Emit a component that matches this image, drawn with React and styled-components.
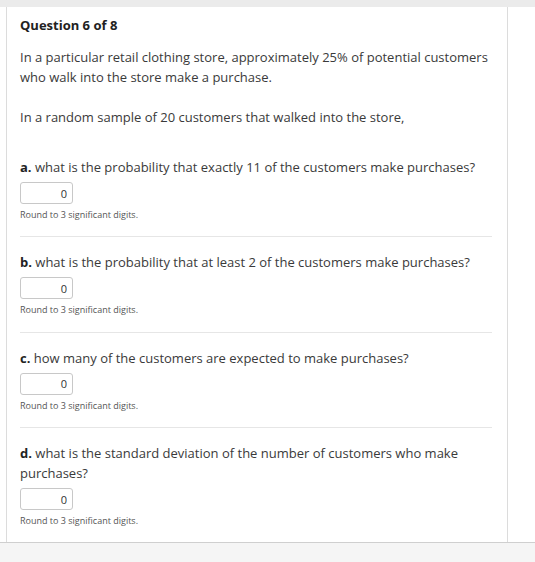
import React from 'react';
import styled, { createGlobalStyle } from 'styled-components';

const Global = createGlobalStyle`
  html, body {
    margin: 0;
    padding: 0;
    background: #fff;
  }
  body {
    font-family: 'Open Sans', 'Noto Sans', sans-serif;
    color: #3a3a3a;
  }
`;

const Page = styled.div`
  display: flex;
  flex-direction: column;
  height: 562px;
`;

const TopBand = styled.div`
  height: 7px;
  background: #ebebeb;
  flex-shrink: 0;
`;

const Main = styled.main`
  flex: 1;
  display: flex;
  min-height: 0;
`;

const Card = styled.section`
  box-sizing: border-box;
  margin-left: 6px;
  width: 502px;
  border-left: 1px solid #dcdcdc;
  border-right: 1px solid #dcdcdc;
  padding: 8px 15px 0 13px;
`;

const Footer = styled.footer`
  height: 19px;
  border-top: 1px solid #cfcfcf;
  background: #f5f5f5;
  flex-shrink: 0;
`;

const Title = styled.h2`
  margin: 0;
  font-size: 13px;
  font-weight: 700;
  color: #222;
  line-height: 20px;
`;

const Para = styled.p`
  margin: ${(p) => p.$top || 0}px 0 0;
  font-size: 13px;
  line-height: 20px;
`;

const Part = styled.div`
  padding-top: ${(p) => (p.$first ? 30 : 15)}px;
  padding-bottom: 15.4px;
  border-bottom: ${(p) => (p.$last ? 'none' : '1px solid #e6e6e6')};
`;

const Prompt = styled.p`
  margin: 0;
  font-size: 13px;
  line-height: 20px;
  b {
    font-weight: 700;
    color: #222;
  }
`;

const Answer = styled.input`
  display: block;
  box-sizing: border-box;
  margin-top: 5px;
  width: 53px;
  height: 22px;
  border: 1px solid #c8c8c8;
  border-radius: 3px;
  padding: 0 5px;
  text-align: right;
  font-family: 'Open Sans', sans-serif;
  font-size: 11px;
  color: #333;
  background: #fff;
`;

const Hint = styled.div`
  margin-top: 5px;
  font-size: 9px;
  line-height: 12px;
  color: #555;
`;

const parts = [
  { label: 'a.', text: 'what is the probability that exactly 11 of the customers make purchases?' },
  { label: 'b.', text: 'what is the probability that at least 2 of the customers make purchases?' },
  { label: 'c.', text: 'how many of the customers are expected to make purchases?' },
  { label: 'd.', text: 'what is the standard deviation of the number of customers who make purchases?' },
];

export default function App() {
  return (
    <>
      <Global />
      <Page>
        <TopBand />
        <Main>
          <Card>
            <Title>Question 6 of 8</Title>
            <Para $top={12}>
              In a particular retail clothing store, approximately 25% of potential customers
              who walk into the store make a purchase.
            </Para>
            <Para $top={20}>In a random sample of 20 customers that walked into the store,</Para>
            {parts.map((p, i) => (
              <Part key={p.label} $first={i === 0} $last={i === parts.length - 1}>
                <Prompt>
                  <b>{p.label}</b> {p.text}
                </Prompt>
                <Answer defaultValue="0" />
                <Hint>Round to 3 significant digits.</Hint>
              </Part>
            ))}
          </Card>
        </Main>
        <Footer />
      </Page>
    </>
  );
}
